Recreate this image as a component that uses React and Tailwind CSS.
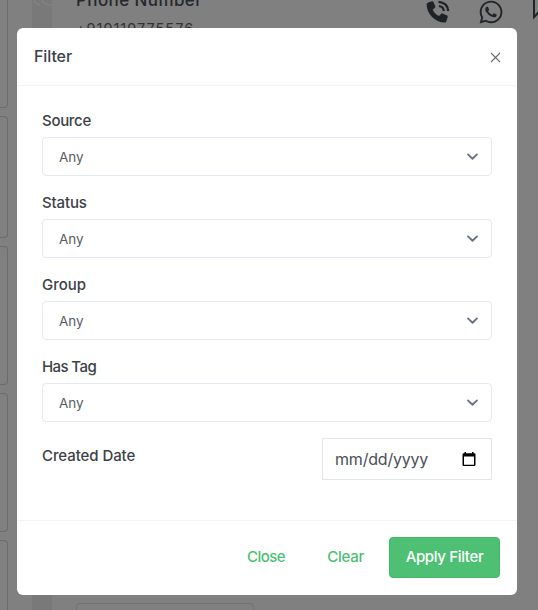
import React from "react";
import { FaWhatsapp } from "react-icons/fa";

const fields = [
  { name: "Source", spacing: "tracking-[-0.3px]" },
  { name: "Status", spacing: "tracking-[-0.15px]" },
  { name: "Group", spacing: "tracking-[0px]" },
  { name: "Has Tag", spacing: "tracking-[-0.6px]" },
];

function CallIcon() {
  return (
    <svg className="h-[24px] w-[26px] shrink-0" viewBox="0 0 26 24" fill="none">
      <path
        d="M3.2 2.4 7 1.2q.9-.2 1.300.6l2 4.400q.3.800-.3 1.400L7.700 9.800c1.400 3 3.500 5.100 6.300 6.300l2.200-2.400q.6-.6 1.400-.3l4.500 2.200q.8.400.6 1.300l-1.400 4.700q-.3.900-1.200.9C10.500 22.800 1.600 14 1.600 4.200q0-1.300 1.600-1.800Z"
        fill="#1f2327"
      />
      <path d="M14 6q4.500.6 4.800 5M13.500 1.800q9 .7 9.700 9.200" stroke="#1f2327" strokeWidth="2.200" />
    </svg>
  );
}

function Contacts() {
  return (
    <div className="flex h-full bg-[#808080]">
      <aside className="flex w-8 shrink-0 flex-col gap-2 pr-6">
        <div className="h-[108px] shrink-0 rounded-br border-r border-b border-[#6c6c6e]" />
        <div className="h-[122px] shrink-0 rounded-r border border-l-0 border-[#6c6c6e]" />
        <div className="h-[139px] shrink-0 rounded-r border border-l-0 border-[#6c6c6e]" />
        <div className="h-[139px] shrink-0 rounded-r border border-l-0 border-[#6c6c6e]" />
        <div className="h-[139px] shrink-0 rounded-r border border-l-0 border-[#6c6c6e]" />
      </aside>
      <div className="h-full w-5 shrink-0 overflow-hidden bg-[#797979]">
        <svg className="h-2 w-5" viewBox="0 0 20 8" fill="none" stroke="#838383" strokeWidth="1.500">
          <path d="M2 0q1 4 6 5M10 0q2 5 10 5" />
        </svg>
      </div>
      <main className="flex min-w-0 flex-1 flex-col justify-between overflow-hidden pl-6">
        <div className="flex">
          <div className="-mt-[13px] w-[349px] shrink-0">
            <div className="text-[17px] leading-[26px] font-medium tracking-[0.4px] text-[#25282c]">Phone Number</div>
            <div className="mt-[4px] text-[14.500px] leading-6 tracking-[1px] text-[#303337]">+919119775576</div>
          </div>
          <div className="flex shrink-0 items-start gap-[27px]">
            <CallIcon />
            <FaWhatsapp className="h-[26px] w-[26px] shrink-0 -translate-y-[1px] text-[#212529]" />
            <svg className="h-5 w-6 shrink-0" viewBox="0 0 24 20" fill="none" stroke="#212529" strokeWidth="2">
              <path d="M3 0v17l5-5h17" />
            </svg>
          </div>
        </div>
        <div className="h-[7px] w-[178px] rounded-t border border-b-0 border-[#727272]" />
      </main>
    </div>
  );
}

function SelectField({ label, spacing }) {
  return (
    <div>
      <div className={`h-[27px] pt-px text-[15px] leading-5 font-medium text-[#3c4147] ${spacing}`}>{label}</div>
      <button className="flex h-[39px] w-full items-center justify-between rounded border border-[#e6e8f3] pr-3 pl-4">
        <span className="text-[13.500px] leading-5 text-[#575d64]">Any</span>
        <svg className="h-[13px] w-[13px]" viewBox="0 0 13 13" fill="none" stroke="#6b7280" strokeWidth="1.900">
          <path d="m2 4.400 4.500 4.300L11 4.400" strokeLinecap="round" strokeLinejoin="round" />
        </svg>
      </button>
    </div>
  );
}

export default function App() {
  return (
    <div className="relative h-[610px] w-[538px] overflow-hidden font-['Inter','Liberation_Sans',sans-serif]">
      <Contacts />
      <div
        role="dialog"
        className="absolute top-[28px] left-[17px] flex h-[567px] w-[500px] flex-col rounded-md bg-white"
      >
        <header className="flex h-[58px] shrink-0 items-center justify-between border-b border-[#f2f3f4] pr-4 pl-[17px]">
          <h2 className="-mt-px text-[16px] leading-6 font-medium tracking-[-0.1px] text-[#3c4147]">Filter</h2>
          <button aria-label="Close" className="mt-px">
            <svg className="h-[11px] w-[11px]" viewBox="0 0 11 11" stroke="#6c6c6c" strokeWidth="1.100">
              <path d="m1 1 9 9M10 1l-9 9" />
            </svg>
          </button>
        </header>
        <section className="flex flex-1 flex-col gap-4 px-[25px] pt-6">
          {fields.map((field) => (
            <SelectField key={field.name} label={field.name} spacing={field.spacing} />
          ))}
          <div className="flex justify-between">
            <div className="pt-2 text-[15px] leading-5 font-medium tracking-[-0.08px] text-[#3c4147]">Created Date</div>
            <div className="flex h-[42px] w-[170px] items-center justify-between border border-[#e2e5e9] pr-[15px] pl-3">
              <span className="text-[16px] leading-6 tracking-[-0.2px] text-[#495057]">mm/dd/yyyy</span>
              <svg className="h-[15px] w-[14px]" viewBox="0 0 14 15">
                <path
                  d="M2.500 0H4v1.300h6V0h1.500v1.300h.8q1.200 0 1.200 1.200v10.300q0 1.200-1.200 1.200H1.700Q.5 14 .5 12.800V2.500q0-1.200 1.200-1.200h.8ZM2 4.500v8.200h10V4.500Z"
                  fill="#000"
                  fillRule="evenodd"
                />
              </svg>
            </div>
          </div>
        </section>
        <footer className="flex h-[75px] shrink-0 items-center justify-end border-t border-[#f2f3f4] pr-[17px] pb-[2px] text-[15px] leading-5 font-medium text-[#4bbf73]">
          <button className="mr-[42px] tracking-[-0.5px]">Close</button>
          <button className="mr-[25px] tracking-[-0.25px]">Clear</button>
          <button className="h-[41px] w-[111px] rounded border border-[#42b86c] bg-[#4dc074] tracking-[-0.350px] text-white">
            Apply Filter
          </button>
        </footer>
      </div>
    </div>
  );
}
